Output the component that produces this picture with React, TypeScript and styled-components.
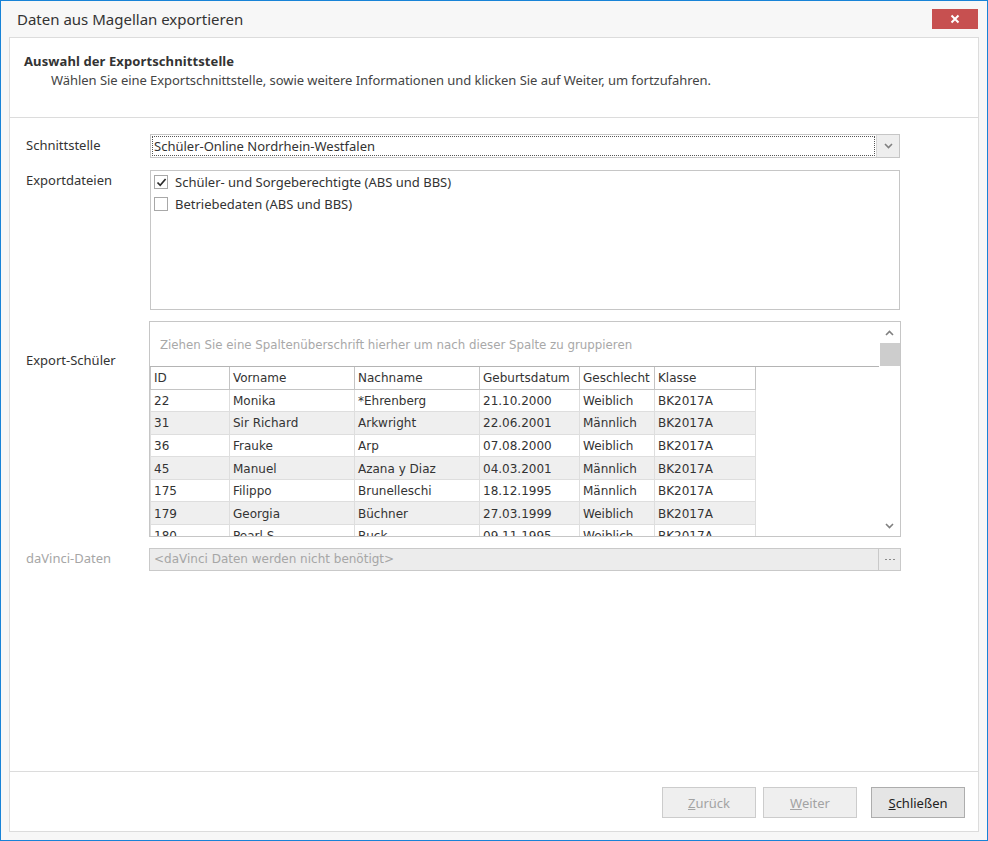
import React, { FC } from 'react'
import styled, { createGlobalStyle } from 'styled-components'

const font = '"Segoe UI", "Noto Sans", "Open Sans", sans-serif'
const gridFont = 'Tahoma, "DejaVu Sans", "Noto Sans", sans-serif'

const columns = [
	{ title: 'ID', width: 79 },
	{ title: 'Vorname', width: 125 },
	{ title: 'Nachname', width: 125 },
	{ title: 'Geburtsdatum', width: 100 },
	{ title: 'Geschlecht', width: 75 },
	{ title: 'Klasse', width: 101 },
]

const rows = [
	['22', 'Monika', '*Ehrenberg', '21.10.2000', 'Weiblich', 'BK2017A'],
	['31', 'Sir Richard', 'Arkwright', '22.06.2001', 'Männlich', 'BK2017A'],
	['36', 'Frauke', 'Arp', '07.08.2000', 'Weiblich', 'BK2017A'],
	['45', 'Manuel', 'Azana y Diaz', '04.03.2001', 'Männlich', 'BK2017A'],
	['175', 'Filippo', 'Brunelleschi', '18.12.1995', 'Männlich', 'BK2017A'],
	['179', 'Georgia', 'Büchner', '27.03.1999', 'Weiblich', 'BK2017A'],
	['180', 'Pearl S.', 'Buck', '09.11.1995', 'Weiblich', 'BK2017A'],
]

const Chevron: FC<{ up?: boolean }> = ({ up }) => (
	<svg width='9' height='6' viewBox='0 0 9 6'>
		<path
			d={up ? 'M1 5 L4.5 1.5 L8 5' : 'M1 1 L4.5 4.5 L8 1'}
			fill='none'
			stroke='#808080'
			strokeWidth='1.6'
		/>
	</svg>
)

const CheckMark = () => (
	<svg width='11' height='11' viewBox='0 0 11 11'>
		<path d='M1.5 5.5 L4.2 8.3 L9.6 2' fill='none' stroke='#2b2b2b' strokeWidth='1.7' />
	</svg>
)

const CloseIcon = () => (
	<svg width='10' height='10' viewBox='0 0 10 10'>
		<path d='M1.5 1.5 L8.5 8.5 M8.5 1.5 L1.5 8.5' stroke='#fff' strokeWidth='2' />
	</svg>
)

const Dots = () => (
	<svg width='12' height='3' viewBox='0 0 12 3'>
		<rect x='1' y='1' width='2' height='1' fill='#8a8a8a' />
		<rect x='5' y='1' width='2' height='1' fill='#8a8a8a' />
		<rect x='9' y='1' width='2' height='1' fill='#8a8a8a' />
	</svg>
)

const App: FC = () => (
	<>
		<GlobalStyle />
		<Window>
			<TitleBar>
				<Title>Daten aus Magellan exportieren</Title>
				<CloseButton>
					<CloseIcon />
				</CloseButton>
			</TitleBar>
			<Panel>
				<Header>
					<HeaderTitle>Auswahl der Exportschnittstelle</HeaderTitle>
					<HeaderText>
						Wählen Sie eine Exportschnittstelle, sowie weitere Informationen und klicken Sie auf Weiter, um fortzufahren.
					</HeaderText>
				</Header>
				<Content>
					<Label $top={2}>Schnittstelle</Label>
					<Combo>
						<ComboText>
							<FocusRect>Schüler-Online Nordrhein-Westfalen</FocusRect>
						</ComboText>
						<ComboButton>
							<Chevron />
						</ComboButton>
					</Combo>

					<Label $top={1}>Exportdateien</Label>
					<CheckList>
						<CheckItem>
							<CheckBox>
								<CheckMark />
							</CheckBox>
							Schüler- und Sorgeberechtigte (ABS und BBS)
						</CheckItem>
						<CheckItem>
							<CheckBox />
							Betriebedaten (ABS und BBS)
						</CheckItem>
					</CheckList>

					<Label $top={29}>Export-Schüler</Label>
					<GridBox>
						<GridMain>
							<GroupPanel>Ziehen Sie eine Spaltenüberschrift hierher um nach dieser Spalte zu gruppieren</GroupPanel>
							<TableWrap>
								<Table>
									<colgroup>
										{columns.map(c => (
											<col key={c.title} style={{ width: c.width }} />
										))}
									</colgroup>
									<thead>
										<tr>
											{columns.map(c => (
												<HeadCell key={c.title}>{c.title}</HeadCell>
											))}
										</tr>
									</thead>
									<tbody>
										{rows.map((r, i) => (
											<Row key={r[0]} $alt={i % 2 === 1}>
												{r.map((v, j) => (
													<Cell key={j}>{v}</Cell>
												))}
											</Row>
										))}
									</tbody>
								</Table>
							</TableWrap>
						</GridMain>
						<ScrollBar>
							<ScrollArrow>
								<Chevron up />
							</ScrollArrow>
							<Thumb />
							<ScrollTrack />
							<ScrollArrow>
								<Chevron />
							</ScrollArrow>
						</ScrollBar>
					</GridBox>

					<Label $top={0} $disabled>
						daVinci-Daten
					</Label>
					<DisabledField>
						<DisabledText>&lt;daVinci Daten werden nicht benötigt&gt;</DisabledText>
						<EllipsisButton>
							<Dots />
						</EllipsisButton>
					</DisabledField>
				</Content>
				<Footer>
					<Button disabled>
						<u>Z</u>urück
					</Button>
					<Button disabled>
						<u>W</u>eiter
					</Button>
					<Button $spaced>
						<u>S</u>chließen
					</Button>
				</Footer>
			</Panel>
		</Window>
	</>
)

export default App

const GlobalStyle = createGlobalStyle`
	body {
		margin: 0;
		background: #fff;
		font-family: ${font};
	}
	* {
		box-sizing: border-box;
	}
`
const Window = styled.div`
	display: flex;
	flex-direction: column;
	width: 988px;
	height: 841px;
	border: 1px solid #1883d7;
	background-color: #f7f7f7;
`
const TitleBar = styled.div`
	display: flex;
	align-items: center;
	justify-content: space-between;
	height: 36px;
	padding: 0 9px 0 16px;
`
const Title = styled.div`
	font-size: 15px;
	color: #333;
`
const CloseButton = styled.div`
	display: flex;
	align-items: center;
	justify-content: center;
	width: 46px;
	height: 20px;
	background-color: #c75050;
`
const Panel = styled.div`
	display: flex;
	flex-direction: column;
	flex: 1;
	margin: 0 8px 8px 8px;
	background-color: #fff;
	border: 1px solid #dcdcdc;
`
const Header = styled.div`
	height: 80px;
	padding: 14px 14px 0 14px;
	border-bottom: 1px solid #dcdcdc;
	color: #333;
	font-size: 13px;
`
const HeaderTitle = styled.div`
	font-weight: bold;
	line-height: 18px;
	letter-spacing: 0.1px;
`
const HeaderText = styled.div`
	padding-left: 27px;
	line-height: 20px;
	color: #444;
	letter-spacing: -0.05px;
`
const Content = styled.div`
	flex: 1;
	display: grid;
	grid-template-columns: 124px 750px;
	grid-auto-rows: min-content;
	row-gap: 12px;
	padding: 16px 0 0 16px;
	font-size: 13px;
	color: #333;
`
const Label = styled.div<{ $top: number; $disabled?: boolean }>`
	padding-top: ${p => p.$top}px;
	color: ${p => (p.$disabled ? '#a6a6a6' : '#333')};
`
const Combo = styled.div`
	display: flex;
	height: 24px;
	border: 1px solid #c6c6c6;
`
const ComboText = styled.div`
	flex: 1;
	padding: 1px;
	display: flex;
`
const FocusRect = styled.div`
	flex: 1;
	border: 1px dotted #555;
	line-height: 18px;
	padding-left: 1px;
`
const ComboButton = styled.div`
	display: flex;
	align-items: center;
	justify-content: center;
	width: 23px;
	background-color: #eeeeee;
	border-left: 1px solid #d6d6d6;
`
const CheckList = styled.div`
	height: 140px;
	border: 1px solid #c6c6c6;
	padding: 0 3px;
`
const CheckItem = styled.div`
	display: flex;
	align-items: center;
	gap: 7px;
	height: 22px;
`
const CheckBox = styled.div`
	display: flex;
	align-items: center;
	justify-content: center;
	width: 14px;
	height: 14px;
	border: 1px solid #a8a8a8;
	background-color: #fff;
`
const GridBox = styled.div`
	display: flex;
	height: 216px;
	margin: -1px -1px 0 -1px;
	border: 1px solid #c6c6c6;
`
const GridMain = styled.div`
	flex: 1;
	display: flex;
	flex-direction: column;
	min-width: 0;
`
const GroupPanel = styled.div`
	height: 45px;
	padding: 16px 0 0 10px;
	color: #a8a8a8;
	font-family: ${gridFont};
	font-size: 11.8px;
	border-bottom: 1px solid #b4b4b4;
`
const TableWrap = styled.div`
	flex: 1;
	overflow: hidden;
`
const Table = styled.table`
	table-layout: fixed;
	width: 605px;
	border-collapse: collapse;
	font-family: ${gridFont};
	font-size: 12px;
	color: #333;
`
const HeadCell = styled.th`
	height: 22px;
	padding: 1px 0 0 3px;
	text-align: left;
	font-weight: normal;
	border: 1px solid #c4c4c4;
	border-top: none;
	white-space: nowrap;
	overflow: hidden;
`
const Row = styled.tr<{ $alt: boolean }>`
	height: 22.6px;
	background-color: ${p => (p.$alt ? '#efefef' : '#fff')};
`
const Cell = styled.td`
	padding: 1px 0 0 3px;
	border: 1px solid #dedede;
	white-space: nowrap;
	overflow: hidden;
`
const ScrollBar = styled.div`
	display: flex;
	flex-direction: column;
	width: 21px;
	background-color: #fff;
`
const ScrollArrow = styled.div`
	display: flex;
	align-items: center;
	justify-content: center;
	height: 21px;
`
const Thumb = styled.div`
	height: 23px;
	margin-left: 1px;
	background-color: #cdcdcd;
`
const ScrollTrack = styled.div`
	flex: 1;
`
const DisabledField = styled.div`
	display: flex;
	height: 23px;
	margin: -1px -1px 0 -1px;
	border: 1px solid #c9c9c9;
	background-color: #ececec;
`
const DisabledText = styled.div`
	flex: 1;
	padding-left: 4px;
	line-height: 21px;
	font-size: 12px;
	color: #a6a6a6;
	font-family: ${gridFont};
`
const EllipsisButton = styled.div`
	display: flex;
	align-items: center;
	justify-content: center;
	width: 22px;
	border-left: 1px solid #c9c9c9;
`
const Footer = styled.div`
	display: flex;
	justify-content: flex-end;
	align-items: flex-start;
	height: 60px;
	padding: 15px 13px 0 0;
	border-top: 1px solid #dcdcdc;
`
const Button = styled.button<{ $spaced?: boolean }>`
	width: 94px;
	height: 31px;
	margin-left: ${p => (p.$spaced ? 14 : 7)}px;
	border: 1px solid #adadad;
	background-color: #e5e5e5;
	font-family: ${font};
	font-size: 13px;
	color: #222;
	&:disabled {
		border-color: #cccccc;
		background-color: #efefef;
		color: #a3a3a3;
	}
`
